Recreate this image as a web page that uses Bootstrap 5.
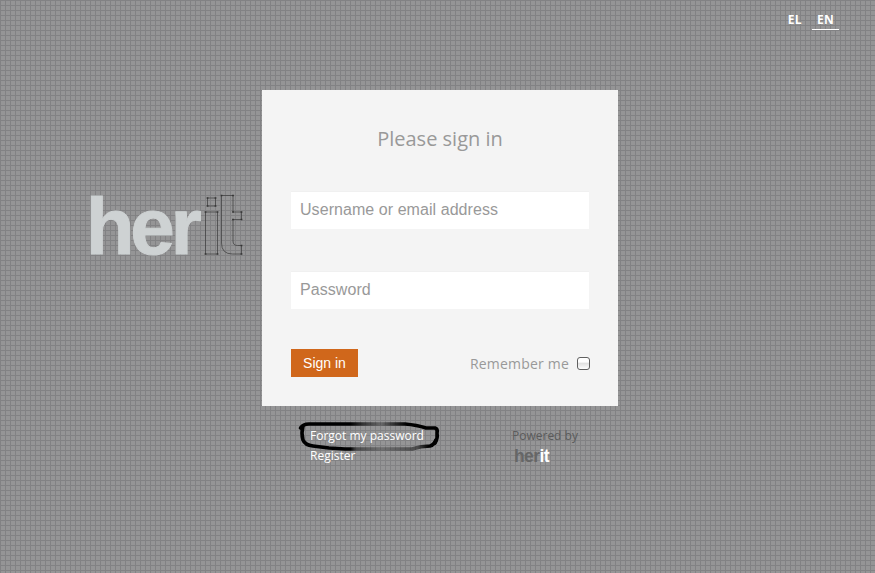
<!DOCTYPE html>
<html lang="en">
<head>
<meta charset="utf-8">
<meta name="viewport" content="width=device-width, initial-scale=1">
<title>herit - Sign in</title>
<link href="https://cdn.jsdelivr.net/npm/bootstrap@5.3.0/dist/css/bootstrap.min.css" rel="stylesheet">
<style>
body{font-family:"Open Sans",sans-serif;min-height:573px;overflow:hidden;background-color:#959596;
 background-image:linear-gradient(90deg,#828284 1px,transparent 1px),linear-gradient(#828284 1px,transparent 1px);background-size:5px 5px}
.langs{height:90px;padding:12px 36px 0 0;font-size:12px;line-height:16px;font-weight:700}
.langs a{color:#fff;padding:0 5px;height:18px;border-bottom:1px solid transparent;letter-spacing:.3px}
.langs a.active{border-color:#fff;margin-left:5px}
.brand-col{width:171px;margin-left:91px;padding-top:83px}
.brand-col svg{margin-left:-11px}
.panel{width:356px;height:316px;background:#f4f4f4;padding:33px 29px 0}
.panel h1{font-size:20px;line-height:32px;color:#999;margin-bottom:36px;font-weight:400}
.panel .form-control{height:38px;padding:0 9px;font:16px "Liberation Sans",sans-serif;letter-spacing:.06px;border:0;margin-bottom:42px;box-shadow:inset 0 1px 0 #f0f0f0}
.panel .form-control::placeholder{color:#999;opacity:1}
.form-foot{margin-top:-2px;height:28px}
.btn-sign{background:#d0671b;color:#fff;font:14px/16px "Liberation Sans",sans-serif;width:67px;height:28px;padding:0}
.remember{font-size:14px;color:#999;letter-spacing:.2px;padding-top:1px}
.tick{appearance:none;width:13px;height:13px;border:1px solid #606060;border-radius:3px;margin:0 -1px 0 8px;background:linear-gradient(#fff 35%,#e2e2e2 50%,#fff)}
.below{margin-left:262px;padding:20px 0 0 48px;font-size:12px;line-height:20px}
.links{width:202px}
.links a{color:#fff;width:max-content;position:relative;z-index:1}
.powered{color:#5b5b5b}
.scribble{left:-14px;top:-17px;z-index:0}
</style>
<script src="https://cdn.jsdelivr.net/npm/bootstrap@5.3.0/dist/js/bootstrap.bundle.min.js"></script>
</head>
<body>
<nav class="langs d-flex justify-content-end">
  <a href="#" class="text-decoration-none">EL</a>
  <a href="#" class="text-decoration-none active">EN</a>
</nav>
<main class="d-flex">
  <div class="brand-col flex-shrink-0">
    <svg class="d-block" width="170" height="106" viewBox="80 173 170 106" role="img" aria-label="herit">
      <text x="85.700" y="254" font-family="Liberation Sans, sans-serif" font-weight="700" font-size="80" letter-spacing="-4.300" fill="#ced2d3" stroke="#ced2d3" stroke-width="1">her</text>
      <path fill="none" stroke="#444" stroke-width=".8" d="M207.500 198h8v8h-8zM205.500 212h12v42h-12zM221.500 195.500h11.500v16.500h8.500v7.500h-8.500v21.500q0 4.500 4.500 4.500h4v8.500h-9q-11 0-11-11z"/>
      <path fill="none" stroke="#333" stroke-width="1.700" stroke-linecap="square" d="M207.500 198h.01M215.500 198h.01M207.500 206h.01M215.500 206h.01M205.500 212h.01M217.500 212h.01M205.500 254h.01M217.500 254h.01M221.500 195.500h.01M233 195.500h.01M233 212h.01M241.500 212h.01M241.500 219.500h.01M233 219.500h.01M241.500 245.500h.01M241.500 254h.01"/>
    </svg>
  </div>
  <form class="panel flex-shrink-0">
    <h1 class="text-center">Please sign in</h1>
    <input class="form-control rounded-0" type="text" placeholder="Username or email address" aria-label="Username or email address">
    <input class="form-control rounded-0" type="password" placeholder="Password" aria-label="Password">
    <div class="form-foot d-flex justify-content-between align-items-center">
      <button class="btn btn-sign rounded-0" type="button">Sign in</button>
      <label class="remember d-flex align-items-center">Remember me<input class="tick" type="checkbox"></label>
    </div>
  </form>
</main>
<footer class="below d-flex">
  <div class="links position-relative">
    <svg class="scribble position-absolute" width="148" height="44" viewBox="296 409 148 44" aria-hidden="true">
      <defs>
        <linearGradient id="inkTop" gradientUnits="userSpaceOnUse" x1="300" x2="440" y1="0" y2="0"><stop offset="0"/><stop offset=".36"/><stop offset=".45" stop-opacity=".65"/><stop offset=".58" stop-opacity=".3"/><stop offset=".65" stop-opacity=".6"/><stop offset=".76"/><stop offset="1"/></linearGradient>
        <linearGradient id="inkLow" gradientUnits="userSpaceOnUse" x1="300" x2="440" y1="0" y2="0"><stop offset="0"/><stop offset=".36"/><stop offset=".4" stop-opacity=".5"/><stop offset=".58" stop-opacity=".25"/><stop offset=".84" stop-opacity=".5"/><stop offset=".92"/></linearGradient>
      </defs>
      <g fill="none" stroke-width="3.600" stroke-linecap="round" stroke-linejoin="round">
        <path stroke="url(#inkTop)" d="M300.500 428Q303 424 309 424L345 424L405 424Q417 425 426 428L435 428Q438 429 437 433Q438 438 435 443"/>
        <path stroke="url(#inkLow)" d="M303 426Q301 433 303 440Q305 445 313 446L329 448L345 449L412 449Q421 446 430 446Q434 445 436 440"/>
      </g>
    </svg>
    <a href="#" class="d-block text-decoration-none">Forgot my password</a>
    <a href="#" class="d-block text-decoration-none">Register</a>
  </div>
  <div class="powered">
    <div>Powered by</div>
    <svg class="d-block" width="42" height="20" viewBox="512 446 42 20" role="img" aria-label="herit">
      <text x="514" y="462" font-family="Liberation Sans, sans-serif" font-weight="700" font-size="17.500" fill="#666" letter-spacing="-.6">her<tspan fill="#fff">it</tspan></text>
    </svg>
  </div>
</footer>
</body>
</html>
